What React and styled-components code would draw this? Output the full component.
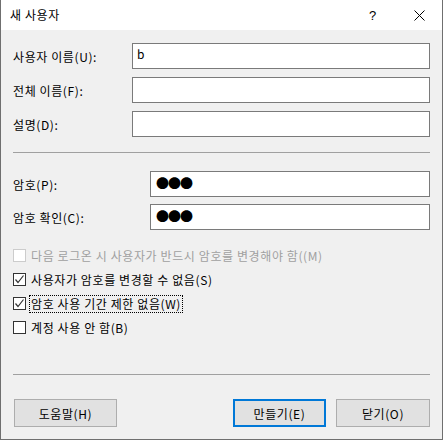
import React from 'react';
import styled, { createGlobalStyle } from 'styled-components';

const GlobalStyle = createGlobalStyle`
    html, body {
        margin: 0;
        padding: 0;
        background: #ffffff;
    }
    body {
        font-family: "Noto Sans CJK KR", "Liberation Sans", sans-serif;
        font-size: 12px;
        letter-spacing: 0.6px;
        color: #000000;
    }
`

const Window = styled.div`
    width: 443px;
    height: 440px;
    box-sizing: border-box;
    border: 1px solid #6f6f6f;
    border-top: none;
    display: flex;
    flex-direction: column;
    background: #f0f0f0;
`

const TitleBar = styled.div`
    height: 30px;
    flex: none;
    background: #ffffff;
    display: flex;
    align-items: center;
    padding-left: 9px;
    font-size: 12px;

    .title {
        flex: 1;
        line-height: 30px;
    }

    .help {
        width: 46px;
        text-align: center;
        font-family: "Liberation Sans", sans-serif;
        font-size: 13px;
    }

    .close {
        width: 46px;
        height: 30px;
        display: flex;
        align-items: center;
        justify-content: center;
    }
`

const Body = styled.div`
    flex: 1;
    display: flex;
    flex-direction: column;
    padding: 13px 12px 11px 12px;
`

const FieldGroup = styled.div`
    display: flex;
    flex-direction: column;
    gap: ${p => p.gap}px;
`

const FieldRow = styled.div`
    display: flex;
    align-items: center;
    height: 26px;

    label {
        width: ${p => p.labelWidth}px;
        flex: none;
        white-space: nowrap;
    }
`

const TextBox = styled.div`
    flex: 1;
    height: 26px;
    box-sizing: border-box;
    border: 1px solid #7a7a7a;
    background: #ffffff;
    padding-left: ${p => p.dots ? 5 : 4}px;
    font-size: ${p => p.dots ? 13 : 12}px;
    line-height: ${p => p.dots ? 22 : 20}px;
    letter-spacing: ${p => p.dots ? '-1px' : '0'};
`

const Separator = styled.div`
    height: 1px;
    background: #a0a0a0;
    margin: ${p => p.top}px 0 ${p => p.bottom}px 0;
`

const CheckList = styled.div`
    display: flex;
    flex-direction: column;
    gap: 11px;
`

const CheckRow = styled.div`
    display: flex;
    align-items: center;
    height: 13px;
    color: ${p => p.disabled ? '#a0a0a0' : '#000000'};
    white-space: nowrap;

    .text {
        margin-left: 4px;
        padding: 0 1px;
        line-height: 16px;
        outline: ${p => p.focused ? '1px dotted #000000' : 'none'};
    }
`

const Box = styled.span`
    width: 13px;
    height: 13px;
    flex: none;
    box-sizing: border-box;
    border: 1px solid ${p => p.disabled ? '#cccccc' : '#333333'};
    background: #ffffff;
    display: flex;
    align-items: center;
    justify-content: center;
`

const ButtonBar = styled.div`
    display: flex;
    align-items: center;
    padding-left: 1px;
`

const Button = styled.div`
    width: ${p => p.width}px;
    height: 28px;
    box-sizing: border-box;
    border: ${p => p.primary ? '2px solid #0078d7' : '1px solid #adadad'};
    background: #e1e1e1;
    display: flex;
    align-items: center;
    justify-content: center;
    margin-left: ${p => p.gapBefore || 0}px;
`

const Spacer = styled.div`
    flex: 1;
`

const Check = () => (
    <svg width="11" height="11" viewBox="0 0 11 11">
        <polyline points="1.5,5.5 4,8.5 9.5,1.5" fill="none" stroke="#333333" strokeWidth="1.2" />
    </svg>
)

const CloseIcon = () => (
    <svg width="11" height="11" viewBox="0 0 11 11">
        <path d="M0.5 0.5 L10.5 10.5 M10.5 0.5 L0.5 10.5" stroke="#000000" strokeWidth="1" />
    </svg>
)

const checks = [
    { text: '다음 로그온 시 사용자가 반드시 암호를 변경해야 함((M)', disabled: true },
    { text: '사용자가 암호를 변경할 수 없음(S)', checked: true },
    { text: '암호 사용 기간 제한 없음(W)', checked: true, focused: true },
    { text: '계정 사용 안 함(B)' },
]

const App = () => {
    return (
        <>
            <GlobalStyle />
            <Window>
                <TitleBar>
                    <span className='title'>새 사용자</span>
                    <span className='help'>?</span>
                    <span className='close'><CloseIcon /></span>
                </TitleBar>
                <Body>
                    <FieldGroup gap={8}>
                        <FieldRow labelWidth={119}>
                            <label>사용자 이름(U):</label>
                            <TextBox>b</TextBox>
                        </FieldRow>
                        <FieldRow labelWidth={119}>
                            <label>전체 이름(F):</label>
                            <TextBox />
                        </FieldRow>
                        <FieldRow labelWidth={119}>
                            <label>설명(D):</label>
                            <TextBox />
                        </FieldRow>
                    </FieldGroup>
                    <Separator top={15} bottom={18} />
                    <FieldGroup gap={7}>
                        <FieldRow labelWidth={137}>
                            <label>암호(P):</label>
                            <TextBox dots>●●●</TextBox>
                        </FieldRow>
                        <FieldRow labelWidth={137}>
                            <label>암호 확인(C):</label>
                            <TextBox dots>●●●</TextBox>
                        </FieldRow>
                    </FieldGroup>
                    <div style={{ height: 19 }} />
                    <CheckList>
                        {checks.map(c => (
                            <CheckRow key={c.text} disabled={c.disabled} focused={c.focused}>
                                <Box disabled={c.disabled}>{c.checked && <Check />}</Box>
                                <span className='text'>{c.text}</span>
                            </CheckRow>
                        ))}
                    </CheckList>
                    <Separator top={40} bottom={24} />
                    <ButtonBar>
                        <Button width={103}>도움말(H)</Button>
                        <Spacer />
                        <Button width={93} primary>만들기(E)</Button>
                        <Button width={94} gapBefore={10}>닫기(O)</Button>
                    </ButtonBar>
                </Body>
            </Window>
        </>
    )
}

export default App;
